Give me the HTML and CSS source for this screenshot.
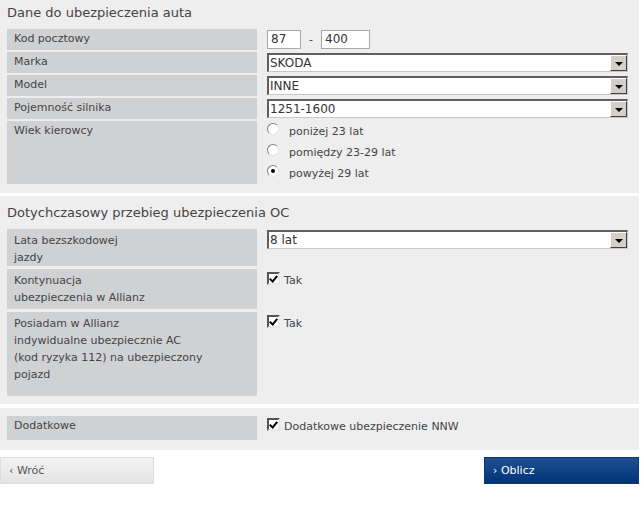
FILE: index.html
```html
<!DOCTYPE html>
<html lang="pl">
<head>
    <meta charset="UTF-8">
    <title>Kalkulator OC</title>
    <link rel="stylesheet" href="styles.css">
</head>
<body>
    <div id="form">
        <div class="section first">
            <h2 class="title">Dane do ubezpieczenia auta</h2>
            <div class="row">
                <div class="label">Kod pocztowy</div>
                <div class="field">
                    <span class="text short">87</span>
                    <span class="dash">-</span>
                    <span class="text long">400</span>
                </div>
            </div>
            <div class="row">
                <div class="label">Marka</div>
                <div class="field">
                    <div class="select"><span class="val">SKODA</span><span class="arrow"></span></div>
                </div>
            </div>
            <div class="row">
                <div class="label">Model</div>
                <div class="field">
                    <div class="select"><span class="val">INNE</span><span class="arrow"></span></div>
                </div>
            </div>
            <div class="row">
                <div class="label">Pojemność silnika</div>
                <div class="field">
                    <div class="select"><span class="val">1251-1600</span><span class="arrow"></span></div>
                </div>
            </div>
            <div class="row">
                <div class="label">Wiek kierowcy</div>
                <div class="field radios">
                    <div class="radio"><span class="dot"></span>poniżej 23 lat</div>
                    <div class="radio"><span class="dot"></span>pomiędzy 23-29 lat</div>
                    <div class="radio"><span class="dot on"></span>powyżej 29 lat</div>
                </div>
            </div>
        </div>

        <div class="section">
            <h2 class="title">Dotychczasowy przebieg ubezpieczenia OC</h2>
            <div class="row">
                <div class="label tall">Lata bezszkodowej<br>jazdy</div>
                <div class="field">
                    <div class="select"><span class="val">8 lat</span><span class="arrow"></span></div>
                </div>
            </div>
            <div class="row">
                <div class="label tall mid">Kontynuacja<br>ubezpieczenia w Allianz</div>
                <div class="field">
                    <div class="check"><span class="box"></span>Tak</div>
                </div>
            </div>
            <div class="row">
                <div class="label tall extra">Posiadam w Allianz<br>indywidualne ubezpiecznie AC<br>(kod ryzyka 112) na ubezpieczony<br>pojazd</div>
                <div class="field">
                    <div class="check"><span class="box"></span>Tak</div>
                </div>
            </div>
        </div>

        <div class="section last">
            <div class="row">
                <div class="label single">Dodatkowe</div>
                <div class="field">
                    <div class="check"><span class="box"></span>Dodatkowe ubezpieczenie NNW</div>
                </div>
            </div>
        </div>

        <div class="buttons">
            <a class="btn back" href="#">&lsaquo; Wróć</a>
            <a class="btn next" href="#">&rsaquo; Oblicz</a>
        </div>
    </div>
</body>
</html>
```

FILE: styles.css
```css
*{
    padding: 0;
    margin: 0;
    box-sizing: border-box;
}
body{
    background: #ffffff;
    font-family: "DejaVu Sans", Verdana, sans-serif;
    font-size: 11px;
    color: #454545;
}
#form{
    width: 639px;
}
.section{
    background: #eeeeee;
    padding: 8px 7px 8px;
    margin-bottom: 4px;
}
.section.first{
    padding-top: 4px;
    padding-bottom: 9px;
    margin-bottom: 3px;
}
.section.last{
    padding-bottom: 10px;
    margin-bottom: 7px;
}
.title{
    font-size: 13px;
    font-weight: normal;
    line-height: 18px;
    margin-bottom: 7px;
    color: #444444;
}
.row{
    display: flex;
    gap: 10px;
    margin-bottom: 2px;
}
.section:not(.first) .row{
    margin-bottom: 3px;
}
.section .row:last-child{
    margin-bottom: 0;
}
.label{
    flex: none;
    width: 250px;
    background: #d0d1d3;
    padding: 2px 7px 3px;
    line-height: 16px;
}
.label.tall{
    line-height: 17px;
    padding: 3px 7px 0;
}
.label.mid{
    padding-bottom: 3px;
}
.label.extra{
    padding-bottom: 13px;
}
.label.single{
    padding-bottom: 6px;
}
.field{
    flex: 1;
    display: flex;
    align-items: flex-start;
    padding-top: 1px;
    padding-right: 4px;
}
.text{
    display: block;
    height: 19px;
    line-height: 17px;
    padding: 0 3px;
    background: #ffffff;
    border: 1px solid #a8a8a8;
    font-size: 12px;
    color: #333333;
}
.text.short{
    width: 34px;
}
.text.long{
    width: 49px;
}
.dash{
    width: 20px;
    text-align: center;
    line-height: 19px;
}
.select{
    flex: 1;
    display: flex;
    height: 19px;
    background: #ffffff;
    border-top: 2px solid #5f5f5f;
    border-left: 2px solid #5f5f5f;
    border-bottom: 1px solid #c8c8c8;
    border-right: 1px solid #c8c8c8;
}
.select .val{
    flex: 1;
    line-height: 16px;
    padding-left: 1px;
    font-size: 12px;
    color: #333333;
}
.select .arrow{
    position: relative;
    width: 17px;
    background: #d4d0c8;
    border-top: 1px solid #ffffff;
    border-left: 1px solid #ffffff;
    border-right: 1px solid #404040;
    border-bottom: 1px solid #404040;
}
.select .arrow::after{
    content: "";
    position: absolute;
    left: 4px;
    top: 6px;
    border-left: 4px solid transparent;
    border-right: 4px solid transparent;
    border-top: 4px solid #000000;
}
.radios{
    flex-direction: column;
    padding-top: 0;
}
.radio{
    display: flex;
    align-items: center;
    height: 21px;
    font-size: 11px;
}
.dot{
    position: relative;
    width: 12px;
    height: 12px;
    margin-right: 10px;
    margin-top: -6px;
    border-radius: 50%;
    background: #ffffff;
    border: 1px solid;
    border-color: #808080 #e4e4e4 #e4e4e4 #808080;
}
.dot.on::after{
    content: "";
    position: absolute;
    left: 3px;
    top: 3px;
    width: 4px;
    height: 4px;
    border-radius: 50%;
    background: #000000;
}
.check{
    display: flex;
    align-items: flex-start;
    line-height: 16px;
    padding-top: 3px;
    font-size: 11px;
}
.box{
    position: relative;
    width: 13px;
    height: 13px;
    margin-right: 4px;
    margin-top: -1px;
    background: #ffffff;
    border: 2px solid;
    border-color: #555555 #e8e8e8 #e8e8e8 #555555;
}
.box::after{
    content: "";
    position: absolute;
    left: 2px;
    top: 0px;
    width: 3px;
    height: 6px;
    border-right: 2px solid #000000;
    border-bottom: 2px solid #000000;
    transform: rotate(40deg);
}
.section.last .check{
    padding-top: 2px;
}
.buttons{
    display: flex;
    justify-content: space-between;
}
.btn{
    display: block;
    width: 155px;
    height: 27px;
    line-height: 25px;
    padding-left: 8px;
    text-decoration: none;
    font-size: 11px;
}
.btn.back{
    width: 154px;
    color: #555555;
    background: linear-gradient(#f2f2f2, #e4e4e4);
    border: 1px solid #dddddd;
}
.btn.next{
    color: #ffffff;
    background: linear-gradient(#1f4f91, #003479);
    border: 1px solid #0b3a7a;
}
```
